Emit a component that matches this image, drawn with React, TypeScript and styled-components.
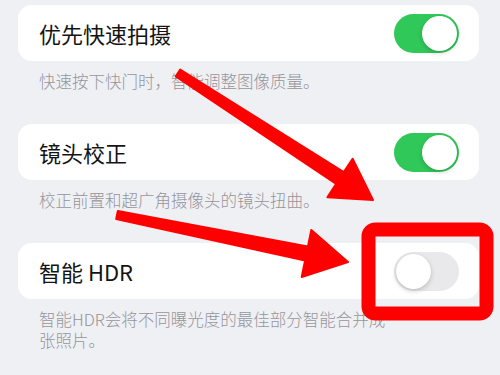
import React from "react";
import styled, { createGlobalStyle } from "styled-components";

const Global = createGlobalStyle`
  html, body { margin: 0; padding: 0; background: #eff0f4; }
  body { font-family: "Noto Sans CJK SC", "Noto Sans", sans-serif; }
  *, *::before, *::after { box-sizing: border-box; }
`;

const Page = styled.div`
  position: relative;
  width: 500px;
  height: 375px;
  overflow: hidden;
  background: #eff0f4;
  padding: 5px 21px 0 18px;
  display: flex;
  flex-direction: column;
`;

const Section = styled.section`
  display: flex;
  flex-direction: column;
  margin-bottom: 32px;
`;

const Card = styled.div`
  height: 56px;
  background: #ffffff;
  border-radius: 14px;
  display: flex;
  align-items: center;
  justify-content: space-between;
  padding: 0 20px 0 21px;
`;

const Title = styled.span`
  font-size: 22px;
  color: #141414;
`;

const Caption = styled.p<{ $maxWidth?: number }>`
  margin: 0;
  padding: 10px 21px 0;
  font-size: 16.5px;
  font-weight: 300;
  line-height: 21px;
  color: #95959a;
  max-width: ${(p) => (p.$maxWidth ? `${p.$maxWidth}px` : "none")};
`;

const Track = styled.div<{ $on: boolean }>`
  width: 65px;
  height: 39px;
  border-radius: 20px;
  background: ${(p) => (p.$on ? "#31c85a" : "#e9e9eb")};
  position: relative;
  flex-shrink: 0;
`;

const Knob = styled.div<{ $on: boolean }>`
  position: absolute;
  top: 2px;
  left: ${(p) => (p.$on ? "28px" : "2px")};
  width: 35px;
  height: 35px;
  border-radius: 50%;
  background: #ffffff;
  box-shadow: 0 2px 5px rgba(0, 0, 0, 0.18), 0 0 1px rgba(0, 0, 0, 0.12);
`;

const Overlay = styled.svg`
  position: absolute;
  left: 0;
  top: 0;
  width: 500px;
  height: 375px;
  pointer-events: none;
`;

const Toggle = ({ on }: { on: boolean }) => (
  <Track $on={on}>
    <Knob $on={on} />
  </Track>
);

const items = [
  { title: "优先快速拍摄", caption: "快速按下快门时，智能调整图像质量。", on: true },
  { title: "镜头校正", caption: "校正前置和超广角摄像头的镜头扭曲。", on: true },
  {
    title: "智能 HDR",
    caption: "智能HDR会将不同曝光度的最佳部分智能合并成一张照片。",
    on: false,
    maxWidth: 417,
  },
];

export default function App() {
  return (
    <>
      <Global />
      <Page>
        {items.map((it) => (
          <Section key={it.title}>
            <Card>
              <Title>{it.title}</Title>
              <Toggle on={it.on} />
            </Card>
            <Caption $maxWidth={it.maxWidth}>{it.caption}</Caption>
          </Section>
        ))}
        <Overlay viewBox="0 0 500 375">
          <polygon
            points="180.2,69.6 343.8,172.1 352.6,158.7 373,200 327.4,197.3 336.2,183.9 175.8,76.4"
            fill="#fe0000"
            stroke="#fe0000"
            strokeWidth="2"
            strokeLinejoin="round"
          />
          <polygon
            points="117.8,211.1 307.9,246.6 311.3,230 348,262 301.7,277 305.1,260.4 116.2,218.9"
            fill="#fe0000"
            stroke="#fe0000"
            strokeWidth="2"
            strokeLinejoin="round"
          />
          <rect
            x="368.5"
            y="229.5"
            width="118"
            height="84"
            rx="7"
            fill="none"
            stroke="#fe0000"
            strokeWidth="14"
          />
        </Overlay>
      </Page>
    </>
  );
}
